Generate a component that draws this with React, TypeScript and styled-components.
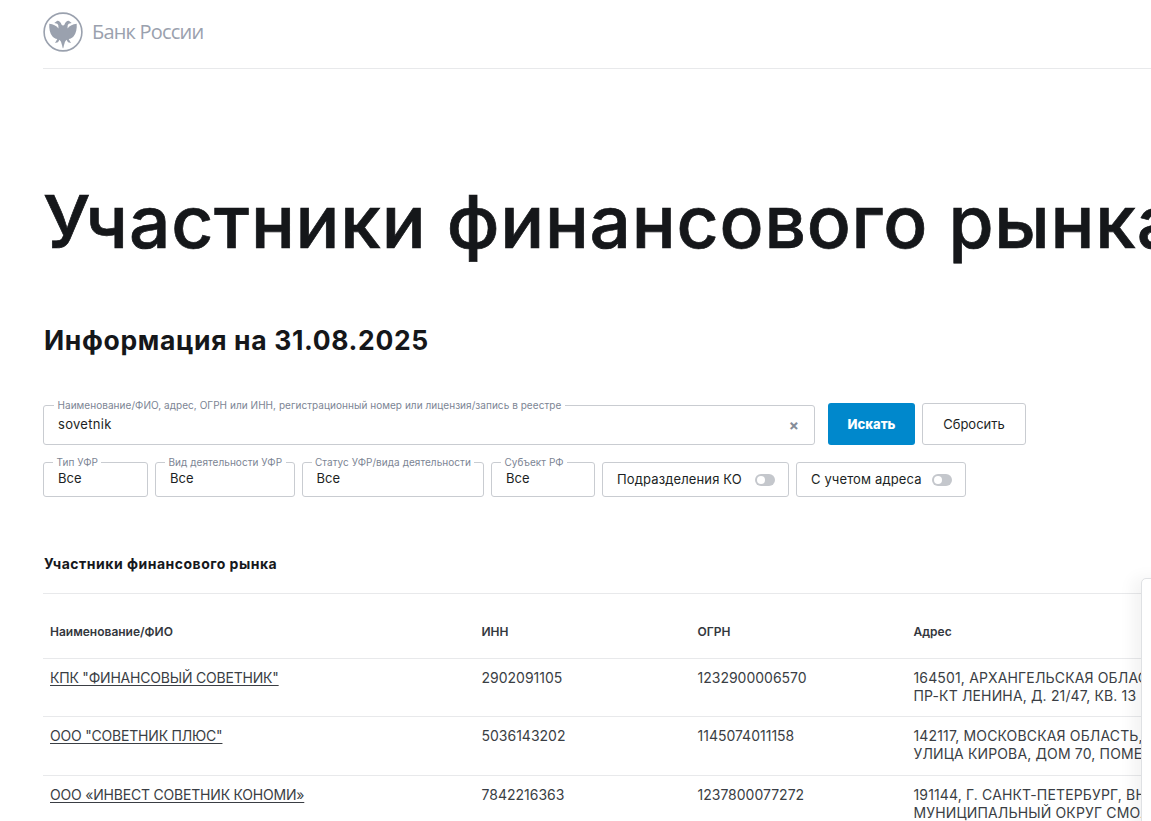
import React from 'react';
import styled, {createGlobalStyle} from 'styled-components';

const rows = [
  {name: 'КПК "ФИНАНСОВЫЙ СОВЕТНИК"', inn: '2902091105', ogrn: '1232900006570', addr: ['164501, АРХАНГЕЛЬСКАЯ ОБЛАСТЬ, Г. СЕВЕРОДВИНСК,', 'ПР-КТ ЛЕНИНА, Д. 21/47, КВ. 13']},
  {name: 'ООО "СОВЕТНИК ПЛЮС"', inn: '5036143202', ogrn: '1145074011158', addr: ['142117, МОСКОВСКАЯ ОБЛАСТЬ, Г. ПОДОЛЬСК,', 'УЛИЦА КИРОВА, ДОМ 70, ПОМЕЩЕНИЕ 1']},
  {name: 'ООО «ИНВЕСТ СОВЕТНИК КОНОМИ»', inn: '7842216363', ogrn: '1237800077272', addr: ['191144, Г. САНКТ-ПЕТЕРБУРГ, ВН.ТЕР.Г.', 'МУНИЦИПАЛЬНЫЙ ОКРУГ СМОЛЬНИНСКОЕ']},
];

const filters = [
  {label: 'Тип УФР', width: 105},
  {label: 'Вид деятельности УФР', width: 139.5},
  {label: 'Статус УФР/вида деятельности', width: 182.5},
  {label: 'Субъект РФ', width: 104},
];

// left half of the eagle, mirrored for the right one
const eagleHalf = 'M20.500 14 L18.600 12.800 C18 10.500 16.500 8.800 14.300 8.800 L11.300 11 L14.300 11.800 L15.300 13.300 L15.500 16.500 C13.300 13.800 10.200 12 6.300 11.800 C5.900 16.500 6.900 21.300 9.300 24.300 C10.500 25.800 12.200 26.800 14.300 27 L12 31 L15 30.200 L16.500 27.800 L18 29.800 L18.800 32.500 L20.500 36.500 Z';

const Eagle: React.FC = () => (
  <svg width="40" height="40" viewBox="0 0 40 40">
    <circle cx="20" cy="20" r="18.900" fill="none" stroke="#9aa1ae" strokeWidth="1.600" />
    <g fill="#9aa1ae">
      <path d={eagleHalf} />
      <path d={eagleHalf} transform="translate(40 0) scale(-1 1)" />
    </g>
  </svg>
);

const App: React.FC = () => (
  <>
    <GlobalStyle />
    <Page>
      <Header>
        <Eagle />
        <BankName>Банк России</BankName>
      </Header>
      <Title>Участники финансового рынка</Title>
      <DateLine>Информация на 31.08.2025</DateLine>
      <SearchRow>
        <SearchField>
          <Legend $left={10}>Наименование/ФИО, адрес, ОГРН или ИНН, регистрационный номер или лицензия/запись в реестре</Legend>
          <SearchValue>sovetnik</SearchValue>
          <ClearMark>×</ClearMark>
        </SearchField>
        <PrimaryButton>Искать</PrimaryButton>
        <SecondaryButton>Сбросить</SecondaryButton>
      </SearchRow>
      <FilterRow>
        {filters.map(f => (
          <FilterBox key={f.label} $width={f.width}>
            <Legend $left={9}>{f.label}</Legend>
            Все
          </FilterBox>
        ))}
        <ToggleBox $width={187}>Подразделения КО<Toggle /></ToggleBox>
        <ToggleBox $width={170}>С учетом адреса<Toggle /></ToggleBox>
      </FilterRow>
      <SectionTitle>Участники финансового рынка</SectionTitle>
      <Table>
        <HeadRow>
          <HeadCell>Наименование/ФИО</HeadCell>
          <HeadCell>ИНН</HeadCell>
          <HeadCell>ОГРН</HeadCell>
          <HeadCell>Адрес</HeadCell>
        </HeadRow>
        {rows.map(r => (
          <BodyRow key={r.inn}>
            <BodyCell><NameLink href="#">{r.name}</NameLink></BodyCell>
            <NumberCell>{r.inn}</NumberCell>
            <NumberCell>{r.ogrn}</NumberCell>
            <AddressCell>{r.addr[0]}<br />{r.addr[1]}</AddressCell>
          </BodyRow>
        ))}
      </Table>
      <SidePanel />
    </Page>
  </>
);

const GlobalStyle = createGlobalStyle`
  html, body {
    margin: 0;
    height: 821px;
    overflow: hidden;
    background: #fff;
    font-family: Inter, 'Liberation Sans', sans-serif;
    color: #1c1f24;
  }
`;

const Page = styled.div`
  position: relative;
  width: 1151px;
  height: 821px;
  overflow: hidden;
  box-sizing: border-box;
  padding-left: 43px;
`;

const Header = styled.header`
  display: flex;
  align-items: center;
  gap: 9px;
  height: 68px;
  border-bottom: 1px solid #e8e9eb;
  svg { margin-top: -4px; }
`;

const BankName = styled.span`
  font-family: 'Open Sans', sans-serif;
  font-size: 20px;
  color: #9aa1ae;
  letter-spacing: -0.8px;
  margin-top: -6px;
`;

const Title = styled.h1`
  margin: 105px 0 0;
  font-size: 73px;
  line-height: 96px;
  font-weight: 500;
  -webkit-text-stroke: 0.7px #15171a;
  letter-spacing: 0.8px;
  white-space: nowrap;
  color: #15171a;
`;

const DateLine = styled.h2`
  margin: 52px 0 0 1px;
  font-size: 26.500px;
  line-height: 36px;
  font-weight: 700;
  letter-spacing: 0.65px;
  color: #15171a;
`;

const SearchRow = styled.div`
  display: flex;
  align-items: flex-end;
  margin-top: 45px;
  height: 42px;
`;

const Legend = styled.span<{$left: number}>`
  position: absolute;
  top: -6px;
  left: ${p => p.$left}px;
  padding: 0 3.500px;
  background: #fff;
  font-size: 10px;
  letter-spacing: 0.05px;
  line-height: 11px;
  color: #7c8594;
  white-space: nowrap;
`;

const SearchField = styled.div`
  position: relative;
  box-sizing: border-box;
  width: 772px;
  height: 40px;
  border: 1px solid #c9ccd1;
  border-radius: 3px;
  display: flex;
  align-items: center;
  justify-content: space-between;
  padding: 0 15px 0 14px;
`;

const SearchValue = styled.span`
  font-size: 13px;
  letter-spacing: 0.3px;
  margin-top: -2px;
`;

const ClearMark = styled.span`
  font-size: 15px;
  font-weight: 700;
  color: #858c98;
`;

const ButtonBase = styled.button`
  box-sizing: border-box;
  height: 42px;
  border-radius: 3px;
  font-family: inherit;
  font-size: 13px;
  cursor: pointer;
`;

const PrimaryButton = styled(ButtonBase)`
  width: 87px;
  margin-left: 13px;
  border: 0;
  background: #0088cc;
  color: #fff;
  font-weight: 800;
`;

const SecondaryButton = styled(ButtonBase)`
  width: 104px;
  margin-left: 7px;
  border: 1px solid #c9ccd1;
  background: #fff;
  color: #1c1f24;
`;

const FilterRow = styled.div`
  display: flex;
  gap: 7px;
  margin-top: 17px;
`;

const FilterBox = styled.div<{$width: number}>`
  position: relative;
  box-sizing: border-box;
  width: ${p => p.$width}px;
  height: 35px;
  border: 1px solid #c9ccd1;
  border-radius: 3px;
  padding: 0 0 3px 14px;
  display: flex;
  align-items: center;
  font-size: 13px;
`;

const ToggleBox = styled.div<{$width: number}>`
  box-sizing: border-box;
  width: ${p => p.$width}px;
  height: 35px;
  border: 1px solid #c9ccd1;
  border-radius: 3px;
  padding: 0 13px 0 14px;
  display: flex;
  align-items: center;
  justify-content: space-between;
  font-size: 13px;
  letter-spacing: 0.13px;
  white-space: nowrap;
  line-height: 31px;
`;

const Toggle = styled.span`
  position: relative;
  width: 20px;
  height: 12px;
  border-radius: 6px;
  background: #c4c7cc;
  &::after {
    content: '';
    position: absolute;
    left: 2px;
    top: 2px;
    width: 8px;
    height: 8px;
    border-radius: 50%;
    background: #fff;
  }
`;

const SectionTitle = styled.div`
  margin-top: 59px;
  padding-bottom: 21px;
  padding-left: 1px;
  border-bottom: 1px solid #e8e9eb;
  font-size: 14px;
  letter-spacing: 0.5px;
  line-height: 16px;
  font-weight: 700;
  color: #16181c;
`;

const Table = styled.div`
  display: grid;
  grid-template-columns: 431.5px 216px 216px 400px;
`;

const HeadRow = styled.div`
  display: grid;
  grid-template-columns: subgrid;
  grid-column: 1 / -1;
  height: 64px;
  align-items: end;
  border-bottom: 1px solid #e8e9eb;
`;

const HeadCell = styled.div`
  padding: 0 7px 19px;
  font-size: 12px;
  line-height: 14px;
  font-weight: 600;
  color: #33373d;
`;

const BodyRow = styled.div`
  display: grid;
  grid-template-columns: subgrid;
  grid-column: 1 / -1;
  box-sizing: border-box;
  height: 58.400px;
  border-bottom: 1px solid #e8e9eb;
`;

const BodyCell = styled.div`
  padding: 10px 7px 0;
  font-size: 14px;
  line-height: 18px;
  letter-spacing: -0.2px;
  color: #3a3e44;
  white-space: nowrap;
`;

const NumberCell = styled(BodyCell)`
  letter-spacing: 0;
`;

const AddressCell = styled(BodyCell)`
  letter-spacing: 0.15px;
`;

const NameLink = styled.a`
  color: #3a3e44;
  text-decoration: underline;
  text-underline-offset: 2px;
`;

const SidePanel = styled.aside`
  position: absolute;
  left: 1141px;
  top: 578px;
  width: 40px;
  height: 300px;
  background: #fff;
  border: 1px solid #dfe1e4;
  border-radius: 5px 0 0 0;
  box-shadow: -8px 0 16px rgba(0, 0, 0, 0.05);
`;

export default App;
